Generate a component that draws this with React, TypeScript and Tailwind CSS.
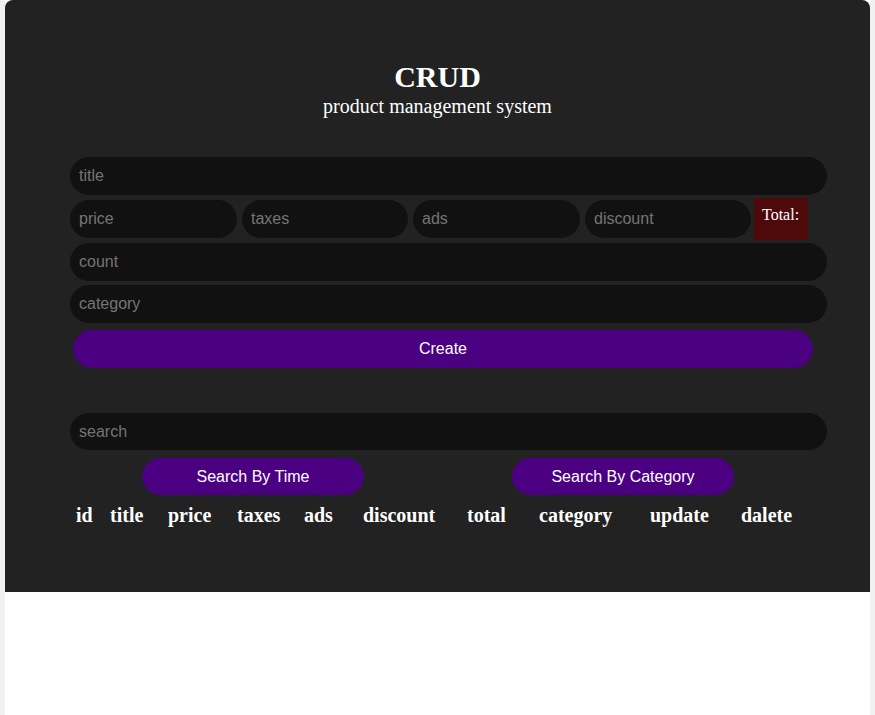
import React from "react";

const serif = "font-['Liberation_Serif',serif]";
const sans = "font-['Liberation_Sans',Arial,sans-serif]";

const inputBase =
  "rounded-full bg-[#111111] pl-[9px] text-[16px] text-white placeholder:text-[#757575] outline-none border-0 " +
  sans;

const headers: { label: string; w: string }[] = [
  { label: "id", w: "w-[34px]" },
  { label: "title", w: "w-[58px]" },
  { label: "price", w: "w-[69px]" },
  { label: "taxes", w: "w-[67px]" },
  { label: "ads", w: "w-[59px]" },
  { label: "discount", w: "w-[104px]" },
  { label: "total", w: "w-[72px]" },
  { label: "category", w: "w-[111px]" },
  { label: "update", w: "w-[91px]" },
  { label: "dalete", w: "w-[60px]" },
];

export default function App() {
  return (
    <div className="flex h-[715px] w-[875px] bg-white">
      {/* window edges */}
      <div className="w-[5px] bg-[#f1f1f1]" />
      <div className="flex-1 bg-white">
        <div className="rounded-t-[8px] bg-[#222222] pt-[59px] pb-[65px]">
          {/* Header */}
          <div className="text-center text-white">
            <h2 className={`text-[30px] font-bold leading-[35px] ${serif}`}>CRUD</h2>
            <p className={`text-[20px] leading-[24px] ${serif}`}>product management system</p>
          </div>

          <div className="pl-[65px]">
            {/* Inputs */}
            <div className="mt-[39px] flex w-[757px] flex-col">
              <input className={`${inputBase} h-[38px] w-full`} placeholder="title" />
              <div className="mt-[3px] flex h-[42px] items-center">
                <input className={`${inputBase} h-[38px] w-[167px]`} placeholder="price" />
                <input className={`${inputBase} ml-[5px] h-[38px] w-[166px]`} placeholder="taxes" />
                <input className={`${inputBase} ml-[5px] h-[38px] w-[167px]`} placeholder="ads" />
                <input className={`${inputBase} ml-[5px] h-[38px] w-[166px]`} placeholder="discount" />
                <div
                  className={`ml-[3px] h-[42px] w-[54px] bg-[#4e0a0a] pl-[8px] pt-[8px] text-[16px] leading-[18px] text-white ${serif}`}
                >
                  Total:
                </div>
              </div>
              <input className={`${inputBase} mt-[3px] h-[38px] w-full`} placeholder="count" />
              <input className={`${inputBase} mt-[4px] h-[38px] w-full`} placeholder="category" />
              <button
                className={`ml-[3px] mt-[7px] h-[38px] w-[740px] rounded-full bg-[#4b0082] text-[16px] text-white ${sans}`}
              >
                Create
              </button>
            </div>

            {/* Search */}
            <div className="mt-[45px] w-[757px]">
              <input className={`${inputBase} h-[37px] w-full`} placeholder="search" />
              <div className="mt-[8px] flex">
                <button
                  className={`ml-[72px] h-[37px] w-[222px] rounded-full bg-[#4b0082] text-[16px] text-white ${sans}`}
                >
                  Search By Time
                </button>
                <button
                  className={`ml-[148px] h-[37px] w-[222px] rounded-full bg-[#4b0082] text-[16px] text-white ${sans}`}
                >
                  Search By Category
                </button>
              </div>
            </div>

            {/* Table header */}
            <div className={`mt-[8px] flex pl-[6px] text-[20px] font-bold leading-[24px] text-white ${serif}`}>
              {headers.map((h) => (
                <span key={h.label} className={h.w}>
                  {h.label}
                </span>
              ))}
            </div>
          </div>
        </div>
      </div>
      <div className="w-[5px] bg-[#f1f1f1]" />
    </div>
  );
}
